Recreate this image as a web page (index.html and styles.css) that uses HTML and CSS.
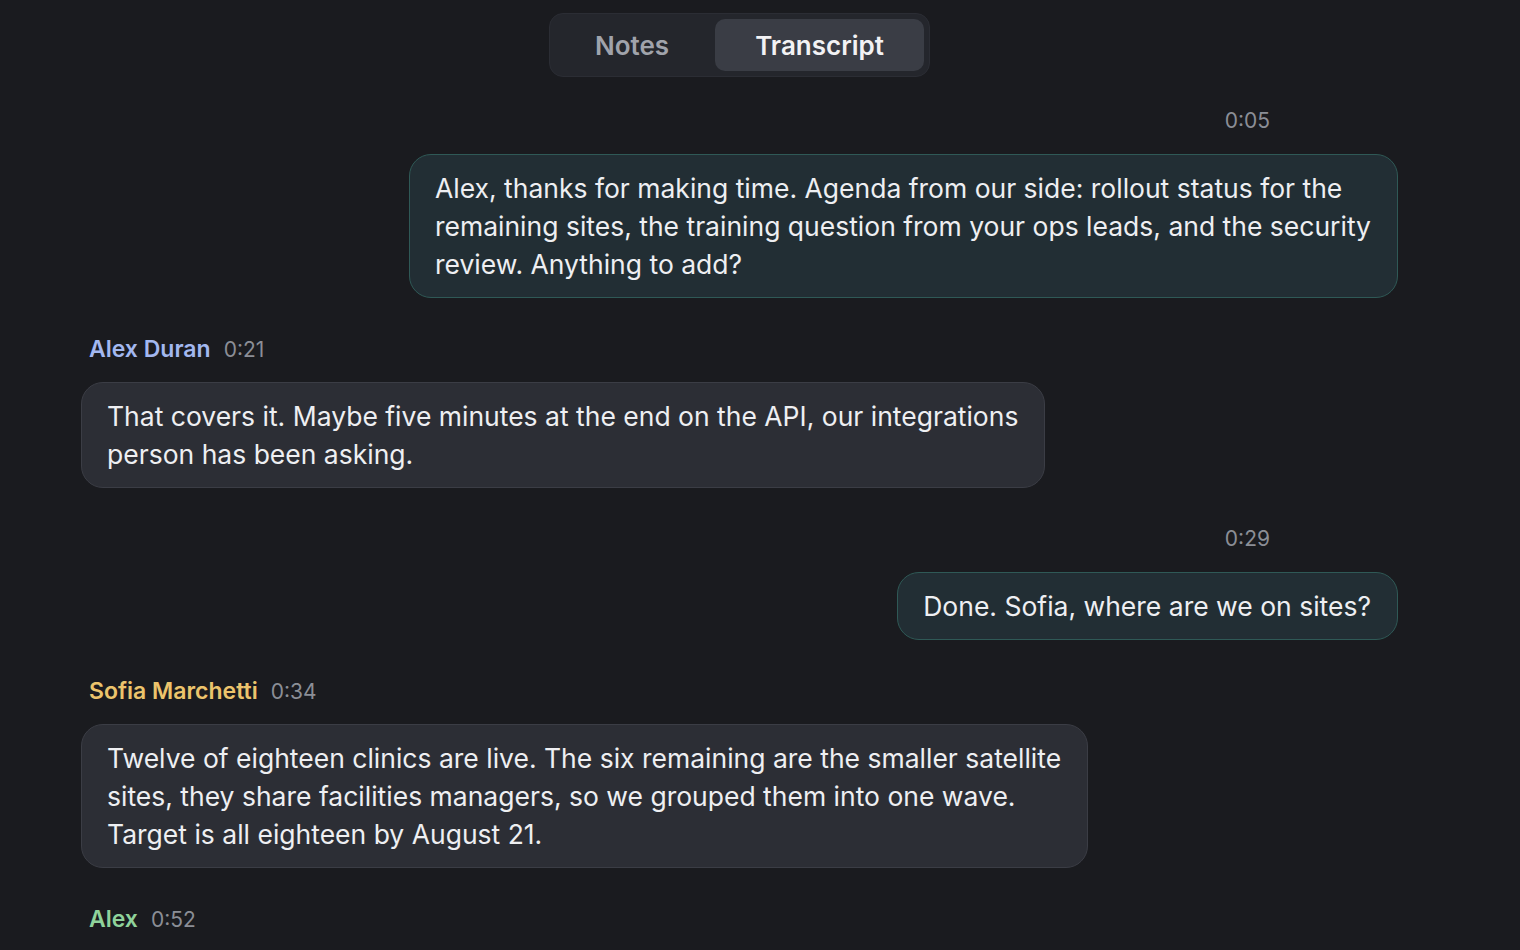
FILE: index.html
```html
<!DOCTYPE html>
<html lang="en">

<head>
    <meta charset="UTF-8">
    <meta name="viewport" content="width=device-width, initial-scale=1.0">
    <title>Meeting Transcript</title>
    <link rel="stylesheet" href="styles.css">
</head>

<body>
    <div class="page">
        <nav class="tabs">
            <a class="tab">Notes</a>
            <a class="tab active">Transcript</a>
        </nav>

        <div class="transcript">
            <div class="msg me">
                <div class="meta"><span class="time">0:05</span></div>
                <div class="bubble">Alex, thanks for making time. Agenda from our side: rollout status for the<br>remaining sites, the training question from your ops leads, and the security<br>review. Anything to add?</div>
            </div>

            <div class="msg">
                <div class="meta"><span class="name blue">Alex Duran</span><span class="time">0:21</span></div>
                <div class="bubble">That covers it. Maybe five minutes at the end on the API, our integrations<br>person has been asking.</div>
            </div>

            <div class="msg me">
                <div class="meta"><span class="time">0:29</span></div>
                <div class="bubble">Done. Sofia, where are we on sites?</div>
            </div>

            <div class="msg">
                <div class="meta"><span class="name yellow">Sofia Marchetti</span><span class="time">0:34</span></div>
                <div class="bubble">Twelve of eighteen clinics are live. The six remaining are the smaller satellite<br>sites, they share facilities managers, so we grouped them into one wave.<br>Target is all eighteen by August 21.</div>
            </div>

            <div class="msg">
                <div class="meta"><span class="name green">Alex</span><span class="time">0:52</span></div>
            </div>
        </div>
    </div>
</body>

</html>
```

FILE: styles.css
```css
body {
    font-family: 'Inter', 'Noto Sans', sans-serif;
    margin: 0;
    padding: 0;
    background-color: #1a1b1f;
    color: #eeeff2;
    height: 950px;
    overflow: hidden;
}

.page {
    width: 1480px;
    box-sizing: border-box;
    padding: 13px 82px 0 81px;
}

/* Tab switcher */
.tabs {
    display: flex;
    gap: 6px;
    width: max-content;
    margin: 0 auto;
    padding: 5px;
    background-color: #24262c;
    border: 1px solid #2b2d34;
    border-radius: 14px;
}

.tab {
    height: 52px;
    line-height: 54px;
    padding: 0 40px;
    font-size: 26px;
    font-weight: 600;
    color: #a0a3ab;
    border-radius: 10px;
    cursor: pointer;
}

.tab.active {
    background-color: #3a3d45;
    color: #f2f2f4;
}

/* Transcript */
.transcript {
    display: flex;
    flex-direction: column;
    padding-top: 32px;
}

.msg {
    display: flex;
    flex-direction: column;
    align-items: flex-start;
    margin-bottom: 39px;
}

.msg.me {
    align-items: flex-end;
}

.meta {
    display: flex;
    align-items: baseline;
    gap: 13px;
    height: 24px;
    line-height: 24px;
    padding-left: 8px;
    margin-bottom: 21px;
}

.msg.me .meta {
    padding-left: 0;
    padding-right: 128px;
}

.name {
    font-size: 23px;
    font-weight: 600;
}

.blue {
    color: #a3b8f0;
}

.yellow {
    color: #ecc46c;
}

.green {
    color: #8fd39b;
}

.time {
    font-size: 21px;
    color: #8b8e96;
}

.bubble {
    padding: 14px 26px 14px 25px;
    font-size: 26.5px;
    line-height: 38px;
    white-space: nowrap;
    background-color: #2c2e35;
    border: 1px solid #3b3d45;
    border-radius: 22px;
}

.msg.me .bubble {
    background-color: #222e34;
    border-color: #2f5956;
}
```
